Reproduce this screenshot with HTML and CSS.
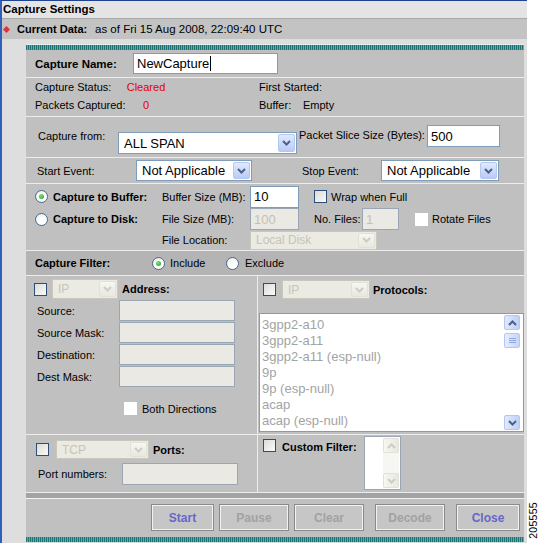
FILE: index.html
```html
<!DOCTYPE html>
<html>
<head>
<meta charset="utf-8">
<title>Capture Settings</title>
<link rel="stylesheet" href="styles.css">
</head>
<body>
<div class="page">
  <div class="window">
    <div class="title">Capture Settings</div>
    <div class="current">
      <span class="diamond"></span>
      <span class="b cur-label">Current Data:</span>
      <span class="cur-text">as of Fri 15 Aug 2008, 22:09:40 UTC</span>
    </div>
    <div class="body">
      <div class="panel">
        <div class="stripe"></div>

        <div class="sec name-sec">
          <span class="b name-label">Capture Name:</span>
          <div class="field name-field">NewCapture<span class="caret"></span></div>
        </div>

        <div class="sec status-sec">
          <span class="st-l">Capture Status:</span><span class="st-v red">Cleared</span><span class="st-r">First Started:</span><span class="st-x"></span>
          <span class="st-l">Packets Captured:</span><span class="st-v red">0</span><span class="st-r">Buffer:</span><span class="st-x">Empty</span>
        </div>

        <div class="sec from-sec">
          <span class="from-label">Capture from:</span>
          <div class="sel from-sel"><span class="sv">ALL SPAN</span><span class="sbtn"><svg width="9" height="6" viewBox="0 0 9 6"><path d="M1 1 L4.5 4.5 L8 1" fill="none" stroke="#4d6185" stroke-width="2"/></svg></span></div>
          <span class="slice-label">Packet Slice Size (Bytes):</span>
          <div class="field slice-field">500</div>
        </div>

        <div class="sec ev-sec">
          <span class="ev-label1">Start Event:</span>
          <div class="sel ev-sel1"><span class="sv">Not Applicable</span><span class="sbtn"><svg width="9" height="6" viewBox="0 0 9 6"><path d="M1 1 L4.5 4.5 L8 1" fill="none" stroke="#4d6185" stroke-width="2"/></svg></span></div>
          <span class="ev-label2">Stop Event:</span>
          <div class="sel ev-sel2"><span class="sv">Not Applicable</span><span class="sbtn"><svg width="9" height="6" viewBox="0 0 9 6"><path d="M1 1 L4.5 4.5 L8 1" fill="none" stroke="#4d6185" stroke-width="2"/></svg></span></div>
        </div>

        <div class="sec buf-sec">
          <div class="buf-row ra">
            <span class="radio on"></span><span class="b buf-opt">Capture to Buffer:</span>
            <span class="buf-lbl">Buffer Size (MB):</span>
            <div class="field buf-field">10</div>
            <span class="cb wrap-cb"></span><span class="cb-text">Wrap when Full</span>
          </div>
          <div class="buf-row rb">
            <span class="radio"></span><span class="b buf-opt">Capture to Disk:</span>
            <span class="buf-lbl">File Size (MB):</span>
            <div class="field buf-field dis">100</div>
            <span class="nf-lbl">No. Files:</span>
            <div class="field nf-field dis">1</div>
            <span class="cb plain rot-cb"></span><span class="cb-text">Rotate Files</span>
          </div>
          <div class="buf-row rc">
            <span class="buf-lbl loc-lbl">File Location:</span>
            <div class="sel dis loc-sel"><span class="sv">Local Disk</span><span class="sbtn"><svg width="9" height="6" viewBox="0 0 9 6"><path d="M1 1 L4.5 4.5 L8 1" fill="none" stroke="#cfcdc0" stroke-width="2"/></svg></span></div>
          </div>
        </div>

        <div class="sec flt-sec">
          <span class="b flt-label">Capture Filter:</span>
          <span class="radio on"></span><span class="flt-opt">Include</span>
          <span class="radio"></span><span class="flt-opt2">Exclude</span>
        </div>

        <div class="sec addr-sec">
          <div class="col-l addr-l">
            <div class="top-row addr-top">
              <span class="cb"></span>
              <div class="sel dis ip-sel"><span class="sv">IP</span><span class="sbtn"><svg width="9" height="6" viewBox="0 0 9 6"><path d="M1 1 L4.5 4.5 L8 1" fill="none" stroke="#cfcdc0" stroke-width="2"/></svg></span></div>
              <span class="b top-lbl">Address:</span>
            </div>
            <div class="fld-row"><span class="fl">Source:</span><div class="field dis af"></div></div>
            <div class="fld-row"><span class="fl">Source Mask:</span><div class="field dis af"></div></div>
            <div class="fld-row"><span class="fl">Destination:</span><div class="field dis af"></div></div>
            <div class="fld-row"><span class="fl">Dest Mask:</span><div class="field dis af"></div></div>
            <div class="both"><span class="cb plain"></span><span class="cb-text">Both Directions</span></div>
          </div>
          <div class="col-r addr-r">
            <div class="top-row proto-top">
              <span class="cb"></span>
              <div class="sel dis ip-sel2"><span class="sv">IP</span><span class="sbtn"><svg width="9" height="6" viewBox="0 0 9 6"><path d="M1 1 L4.5 4.5 L8 1" fill="none" stroke="#cfcdc0" stroke-width="2"/></svg></span></div>
              <span class="b top-lbl">Protocols:</span>
            </div>
            <div class="listbox">
              <div class="items">
                <div>3gpp2-a10</div>
                <div>3gpp2-a11</div>
                <div>3gpp2-a11 (esp-null)</div>
                <div>9p</div>
                <div>9p (esp-null)</div>
                <div>acap</div>
                <div>acap (esp-null)</div>
              </div>
              <div class="vscroll">
                <span class="sb-btn"><svg width="9" height="6" viewBox="0 0 9 6"><path d="M1 5 L4.5 1.5 L8 5" fill="none" stroke="#4d6185" stroke-width="2"/></svg></span>
                <span class="sb-thumb"><svg width="7" height="7" viewBox="0 0 7 7"><path d="M0 1.5 H7 M0 3.5 H7 M0 5.5 H7" stroke="#8fa8e0" stroke-width="1"/></svg></span>
                <span class="sb-track"></span>
                <span class="sb-btn"><svg width="9" height="6" viewBox="0 0 9 6"><path d="M1 1 L4.5 4.5 L8 1" fill="none" stroke="#4d6185" stroke-width="2"/></svg></span>
              </div>
            </div>
          </div>
        </div>

        <div class="sec ports-sec">
          <div class="col-l ports-l">
            <div class="top-row port-top">
              <span class="cb"></span>
              <div class="sel dis tcp-sel"><span class="sv">TCP</span><span class="sbtn"><svg width="9" height="6" viewBox="0 0 9 6"><path d="M1 1 L4.5 4.5 L8 1" fill="none" stroke="#cfcdc0" stroke-width="2"/></svg></span></div>
              <span class="b top-lbl">Ports:</span>
            </div>
            <div class="pn-row"><span class="pn-lbl">Port numbers:</span><div class="field dis af"></div></div>
          </div>
          <div class="col-r ports-r">
            <span class="cb cf-cb"></span>
            <span class="b cf-lbl">Custom Filter:</span>
            <div class="textarea">
              <span class="ta-body"></span>
              <span class="ta-scroll">
                <span class="sb-btn dis"><svg width="9" height="6" viewBox="0 0 9 6"><path d="M1 5 L4.5 1.5 L8 5" fill="none" stroke="#cfcdc0" stroke-width="2"/></svg></span>
                <span class="sb-track"></span>
                <span class="sb-btn dis"><svg width="9" height="6" viewBox="0 0 9 6"><path d="M1 1 L4.5 4.5 L8 1" fill="none" stroke="#cfcdc0" stroke-width="2"/></svg></span>
              </span>
            </div>
          </div>
        </div>

        <div class="darkbar"></div>

        <div class="btn-row">
          <span class="btn act btn-start">Start</span>
          <span class="btn btn-pause">Pause</span>
          <span class="btn btn-clear">Clear</span>
          <span class="btn btn-decode">Decode</span>
          <span class="btn act btn-close">Close</span>
        </div>

        <div class="stripe bottom"></div>
      </div>
    </div>
  </div>
  <div class="side"><span class="figno">205555</span></div>
</div>
</body>
</html>
```

FILE: styles.css
```css
* { box-sizing: border-box; }
html, body { margin: 0; padding: 0; }
body {
  width: 539px;
  height: 543px;
  overflow: hidden;
  background: #fff;
  font-family: "Liberation Sans", Arial, sans-serif;
  font-size: 11px;
  color: #000;
}
.b { font-weight: bold; }
.red { color: #e00000; }

.page { display: flex; height: 543px; }
.window {
  width: 527px;
  height: 543px;
  border-left: 2px solid #2f5fb8;
  border-top: 1px solid #20438f;
  background: #dedede;
  display: flex;
  flex-direction: column;
}
.side {
  flex: 1;
  display: flex;
  align-items: flex-end;
  padding: 0 0 4px 1px;
}
.figno {
  writing-mode: vertical-rl;
  transform: rotate(180deg);
  font-size: 10.5px;
  letter-spacing: 0.3px;
  line-height: 10px;
}

.title {
  height: 18px;
  line-height: 17px;
  background: #e4e4e4;
  border-bottom: 1px solid #a8a8a8;
  font-weight: bold;
  font-size: 11.5px;
  padding-left: 1px;
}
.current {
  height: 20px;
  background: #c3c3c3;
  display: flex;
  align-items: center;
  font-size: 11px;
}
.diamond {
  width: 5px;
  height: 5px;
  background: #d8353e;
  transform: rotate(45deg);
  margin-left: 2px;
  margin-right: 8px;
}
.cur-label { width: 78px; margin-left: 0; }
.cur-text { font-size: 11.5px; }

.body { flex: 1; padding: 5px 0 0 24px; }
.panel { width: 498px; background: #c0c0c0; }

.stripe {
  height: 6px;
  border-top: 1px solid #e6efef;
  background: repeating-linear-gradient(90deg, #1f7373 0 1px, #62a9a9 1px 2px);
}
.stripe.bottom { border-top: none; border-bottom: 1px solid #cfe0e0; }

.sec { border-bottom: 1px solid #ededed; }

.field {
  background: #fff;
  border: 1px solid #7f9db9;
  font-size: 13px;
  padding-left: 3px;
  display: flex;
  align-items: center;
  white-space: nowrap;
}
.field.dis { background: #ebe9e3; border-color: #9aa6b4; color: #c4c1b3; }

/* name */
.name-sec { height: 28px; display: flex; align-items: center; padding-left: 9px; }
.name-label { width: 98px; font-size: 11.5px; }
.name-field { width: 145px; height: 21px; }
.caret { display: inline-block; width: 1px; height: 15px; background: #000; margin-left: 1px; }

/* status */
.status-sec {
  height: 39px;
  display: grid;
  grid-template-columns: 80px 62px 126px 1fr;
  grid-auto-rows: 18px;
  align-items: center;
  padding-left: 9px;
}
.st-l { white-space: nowrap; }
.st-v { text-align: center; }
.st-r { padding-left: 82px; white-space: nowrap; }

/* capture from */
.from-sec { height: 41px; display: flex; align-items: flex-start; padding-left: 12px; }
.from-label { width: 80px; margin-top: 12px; line-height: 14px; }
.slice-label { width: 128px; margin-top: 11px; margin-left: 2px; line-height: 14px; }
.from-sel { width: 179px; height: 22px; margin-top: 15px; }
.slice-field { width: 73px; height: 22px; margin-top: 8px; }

/* select */
.sel {
  display: flex;
  background: #fff;
  border: 1px solid #7f9db9;
  font-size: 13px;
}
.sel .sv { flex: 1; padding-left: 5px; display: flex; align-items: center; white-space: nowrap; overflow: hidden; }
.sel .sbtn {
  width: 17px;
  margin: 1px;
  border: 1px solid #b4c7f1;
  border-radius: 2px;
  background: linear-gradient(#e0e9fe, #b9ccf6);
  display: flex;
  align-items: center;
  justify-content: center;
}
.sel.dis { background: #ebeae3; border-color: #c9c7ba; color: #c8c5b5; }
.sel.dis .sbtn { background: linear-gradient(#f7f7f3, #e8e7e0); border-color: #e2e1d9; }

/* events */
.ev-sec { height: 26px; display: flex; align-items: center; padding-left: 11px; }
.ev-label1 { width: 99px; }
.ev-sel1 { width: 116px; height: 21px; }
.ev-label2 { width: 79px; margin-left: 50px; }
.ev-sel2 { width: 118px; height: 21px; }

/* radios / checkboxes */
.radio {
  width: 13px;
  height: 13px;
  border-radius: 50%;
  border: 1px solid #4a6c8f;
  background: radial-gradient(circle at 60% 65%, #fff 0 40%, #dcdcd6 100%);
  flex: none;
  position: relative;
}
.radio.on::after {
  content: "";
  position: absolute;
  left: 3px;
  top: 3px;
  width: 5px;
  height: 5px;
  border-radius: 50%;
  background: radial-gradient(circle at 40% 35%, #7fe07f, #1f9d1f);
}
.cb {
  width: 13px;
  height: 13px;
  border: 1px solid #2c4f78;
  background: linear-gradient(135deg, #dcdcd6, #fafafa);
  flex: none;
}
.cb.plain { border: none; background: #fff; }
.cb-text { margin-left: 4px; white-space: nowrap; }

/* buffer */
.buf-sec { height: 67px; padding: 1px 0 0 9px; }
.buf-row { display: flex; align-items: center; }
.ra { height: 23px; }
.rb { height: 22px; }
.rc { height: 20px; }
.buf-opt { width: 109px; margin-left: 5px; white-space: nowrap; }
.buf-lbl { width: 88px; white-space: nowrap; }
.loc-lbl { margin-left: 127px; }
.buf-field { width: 49px; height: 22px; }
.rb .buf-field { height: 22px; }
.wrap-cb { margin-left: 15px; }
.nf-lbl { width: 48px; margin-left: 15px; }
.nf-field { width: 37px; height: 22px; }
.rot-cb { margin-left: 16px; }
.rb .cb-text { margin-left: 4px; }
.loc-sel { width: 127px; height: 19px; font-size: 12px; }

/* filter header */
.flt-sec { height: 25px; background: #b4b4b4; display: flex; align-items: center; padding-left: 9px; }
.flt-label { width: 117px; }
.flt-opt { width: 56px; margin-left: 5px; }
.flt-opt2 { margin-left: 6px; }

/* address */
.addr-sec, .ports-sec { display: flex; }
.addr-sec { height: 159px; }
.col-l { width: 232px; border-right: 1px solid #ededed; }
.col-r { flex: 1; }
.top-row { display: flex; align-items: center; }
.top-lbl { white-space: nowrap; }
.addr-l { padding-top: 3px; }
.addr-top { height: 20px; padding-left: 8px; margin-bottom: 1px; }
.ip-sel { width: 66px; height: 20px; margin-left: 5px; margin-right: 4px; font-size: 12px; }
.fld-row { display: flex; align-items: center; height: 21px; margin-bottom: 1px; padding-left: 11px; }
.fl { width: 82px; white-space: nowrap; }
.af { width: 116px; height: 21px; }
.both { display: flex; align-items: center; margin-top: 15px; padding-left: 98px; height: 13px; }
.both .cb-text { margin-left: 5px; }

.addr-r { padding-top: 4px; }
.proto-top { height: 19px; padding-left: 5px; }
.ip-sel2 { width: 88px; height: 19px; margin-left: 6px; margin-right: 3px; font-size: 12px; }
.listbox {
  margin: 14px 0 0 1px;
  width: 265px;
  height: 119px;
  background: #fff;
  border: 1px solid #7f9db9;
  display: flex;
}
.items {
  flex: 1;
  padding: 3px 0 0 2px;
  font-size: 13px;
  line-height: 16px;
  color: #a3a3a3;
  white-space: nowrap;
}
.vscroll {
  width: 16px;
  margin: 1px 3px 1px 0;
  display: flex;
  flex-direction: column;
}
.sb-btn {
  height: 15px;
  border: 1px solid #b4c7f1;
  border-radius: 2px;
  background: linear-gradient(90deg, #e0e9fe, #bfd0f7);
  display: flex;
  align-items: center;
  justify-content: center;
  flex: none;
}
.sb-thumb {
  height: 15px;
  margin-top: 3px;
  border: 1px solid #b4c7f1;
  border-radius: 2px;
  background: linear-gradient(90deg, #e6edfe, #c6d5f8);
  display: flex;
  align-items: center;
  justify-content: center;
}
.sb-track { flex: 1; }

/* ports */
.ports-sec { height: 58px; }
.ports-l { padding-top: 5px; }
.port-top { height: 19px; padding-left: 10px; }
.tcp-sel { width: 93px; height: 19px; margin-left: 7px; margin-right: 4px; font-size: 12px; }
.pn-row { display: flex; align-items: center; margin-top: 4px; height: 22px; padding-left: 12px; }
.pn-lbl { width: 84px; white-space: nowrap; }
.pn-row .af { height: 22px; }

.ports-r { display: flex; align-items: flex-start; padding-top: 1px; }
.cf-cb { margin: 3px 0 0 5px; }
.cf-lbl { width: 82px; margin: 5px 0 0 6px; line-height: 13px; white-space: nowrap; }
.textarea {
  width: 37px;
  height: 54px;
  background: #fff;
  border: 1px solid #9aa6b4;
  display: flex;
}
.ta-body { flex: 1; }
.ta-scroll {
  width: 16px;
  margin: 1px 1px 1px 0;
  display: flex;
  flex-direction: column;
  background: #f6f6f2;
}
.sb-btn.dis { background: linear-gradient(90deg, #f7f7f3, #e8e7e0); border-color: #e2e1d9; }

/* bottom */
.darkbar { height: 6px; background: #a3a3a3; border-bottom: 1px solid #f2f2f2; }
.btn-row { height: 38px; display: flex; align-items: flex-start; padding: 5px 0 0 125px; }
.btn {
  height: 27px;
  border: 1px solid #8a8a8a;
  box-shadow: inset 1px 1px 0 #f2f2f2, inset -1px -1px 0 #f2f2f2;
  background: #c6c6c6;
  font-weight: bold;
  font-size: 12px;
  color: #a2a2a2;
  display: flex;
  align-items: center;
  justify-content: center;
  flex: none;
}
.btn.act { color: #6767c9; }
.btn-start { width: 63px; }
.btn-pause { width: 70px; margin-left: 5px; }
.btn-clear { width: 70px; margin-left: 5px; }
.btn-decode { width: 70px; margin-left: 11px; }
.btn-close { width: 64px; margin-left: 11px; }
```
